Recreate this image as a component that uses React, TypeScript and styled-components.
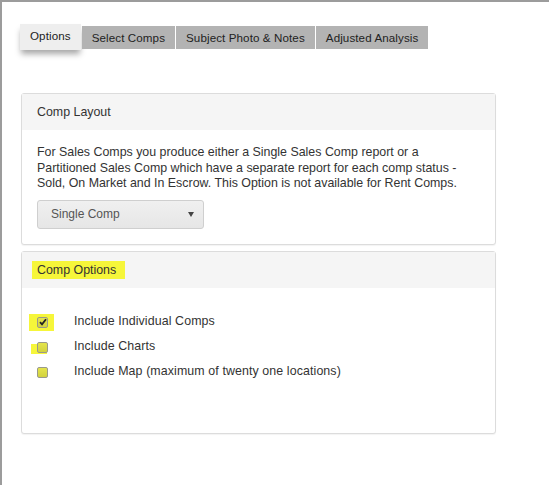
import React from 'react';
import styled, { createGlobalStyle } from 'styled-components';

const GlobalStyle = createGlobalStyle`
  html, body {
    margin: 0;
    padding: 0;
    background: #fff;
  }
  body {
    font-family: "Liberation Sans", Arial, sans-serif;
    color: #333;
  }
`;

const Frame = styled.div`
  box-sizing: border-box;
  width: 549px;
  height: 485px;
  border-top: 2px solid #9c9c9c;
  border-left: 2px solid #9c9c9c;
  padding: 22px 0 0 18px;
`;

const TabBar = styled.div`
  display: flex;
  align-items: flex-start;
  gap: 1px;
  height: 69px;
`;

const Tab = styled.div<{ $active?: boolean }>`
  box-sizing: border-box;
  font-size: 11.6px;
  letter-spacing: 0.1px;
  color: #222;
  white-space: nowrap;
  ${({ $active }) =>
    $active
      ? `
    height: 26px;
    padding: 5px 10px 0;
    background: #eeeeee;
    box-shadow: 0 5px 6px -1px rgba(0, 0, 0, 0.35);
  `
      : `
    margin-top: 2px;
    height: 23px;
    padding: 5px 10px 0;
    background: #b3b3b3;
  `}
`;

const Panel = styled.div`
  box-sizing: border-box;
  width: 475px;
  margin-left: 1px;
  margin-bottom: 6px;
  border: 1px solid #dcdcdc;
  border-radius: 3px;
  box-shadow: 0 1px 1px rgba(0, 0, 0, 0.05);
  background: #fff;
`;

const PanelHeader = styled.div`
  display: flex;
  align-items: center;
  height: 36px;
  padding: 0 15px;
  background: #f5f5f5;
  font-size: 12.4px;
  color: #333;
`;

const Highlight = styled.span`
  background: #f6f63a;
  padding: 2px 9px 2px 5px;
  margin-left: -5px;
  line-height: 14px;
`;

const PanelBody = styled.div<{ $pt: number; $pb: number }>`
  padding: ${({ $pt, $pb }) => `${$pt}px 15px ${$pb}px`};
`;

const Paragraph = styled.p`
  margin: 0 0 8px;
  font-size: 12.4px;
  line-height: 15.6px;
  color: #333;
`;

const Select = styled.div`
  box-sizing: border-box;
  display: flex;
  align-items: center;
  justify-content: space-between;
  width: 167px;
  height: 29px;
  padding: 0 9px 0 13px;
  border: 1px solid #cfcfcf;
  border-radius: 3px;
  background: linear-gradient(#f0f0f0, #e6e6e6);
  font-size: 12px;
  color: #555;
`;

const Caret = styled.span`
  width: 0;
  height: 0;
  border-left: 3px solid transparent;
  border-right: 3px solid transparent;
  border-top: 5px solid #444;
`;

const OptionRow = styled.div`
  display: flex;
  align-items: center;
  height: 25px;
`;

const BoxCell = styled.div`
  width: 37px;
  display: flex;
  align-items: center;
`;

const BoxMark = styled.span<{ $mode: 'full' | 'partial' | 'none' }>`
  position: relative;
  display: inline-flex;
  ${({ $mode }) =>
    $mode === 'full' &&
    `
    background: #f6f63a;
    padding: 3px 6px 3px 8px;
    margin-left: -8px;
  `}
  ${({ $mode }) =>
    $mode === 'partial' &&
    `
    &::before {
      content: '';
      position: absolute;
      left: -6px;
      top: 2px;
      width: 16px;
      height: 10px;
      background: #f6f63a;
    }
  `}
`;

const Box = styled.span`
  position: relative;
  box-sizing: border-box;
  width: 11px;
  height: 11px;
  border: 1px solid #9a9a8a;
  border-radius: 2px;
  background: linear-gradient(#e4e44c, #d2d23e);
  display: flex;
  align-items: center;
  justify-content: center;
`;

const OptionLabel = styled.span`
  font-size: 12.4px;
  letter-spacing: 0.1px;
  color: #333;
  margin-top: -3px;
`;

const CheckMark = () => (
  <svg width="8" height="8" viewBox="0 0 8 8">
    <path d="M1 4.2 L3 6.4 L7 1.2" fill="none" stroke="#222" strokeWidth="1.8" />
  </svg>
);

const options: { label: string; checked: boolean; mode: 'full' | 'partial' | 'none' }[] = [
  { label: 'Include Individual Comps', checked: true, mode: 'full' },
  { label: 'Include Charts', checked: false, mode: 'partial' },
  { label: 'Include Map (maximum of twenty one locations)', checked: false, mode: 'none' },
];

export default function App() {
  return (
    <>
      <GlobalStyle />
      <Frame>
        <TabBar>
          <Tab $active>Options</Tab>
          <Tab>Select Comps</Tab>
          <Tab>Subject Photo &amp; Notes</Tab>
          <Tab>Adjusted Analysis</Tab>
        </TabBar>
        <Panel>
          <PanelHeader>Comp Layout</PanelHeader>
          <PanelBody $pt={15} $pb={15}>
            <Paragraph>
              For Sales Comps you produce either a Single Sales Comp report or a
              Partitioned Sales Comp which have a separate report for each comp status -
              Sold, On Market and In Escrow. This Option is not available for Rent Comps.
            </Paragraph>
            <Select>
              <span>Single Comp</span>
              <Caret />
            </Select>
          </PanelBody>
        </Panel>
        <Panel>
          <PanelHeader>
            <Highlight>Comp Options</Highlight>
          </PanelHeader>
          <PanelBody $pt={22} $pb={48}>
            {options.map((o) => (
              <OptionRow key={o.label}>
                <BoxCell>
                  <BoxMark $mode={o.mode}>
                    <Box>{o.checked && <CheckMark />}</Box>
                  </BoxMark>
                </BoxCell>
                <OptionLabel>{o.label}</OptionLabel>
              </OptionRow>
            ))}
          </PanelBody>
        </Panel>
      </Frame>
    </>
  );
}
